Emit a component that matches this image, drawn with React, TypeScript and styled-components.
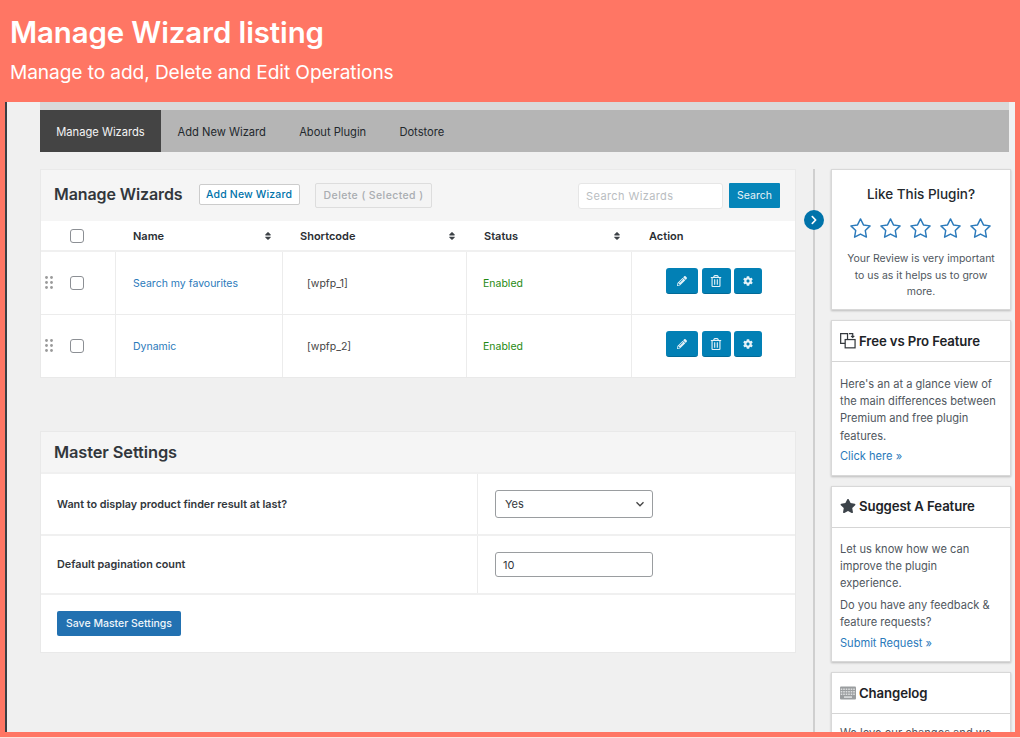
import React from 'react';
import styled, { createGlobalStyle } from 'styled-components';
import { FaPencilAlt, FaRegTrashAlt, FaCog, FaStar, FaSort, FaChevronRight } from 'react-icons/fa';
import { FiStar } from 'react-icons/fi';

const Global = createGlobalStyle`
  html, body { margin: 0; padding: 0; height: 738px; overflow: hidden; background: #ff7664; }
  * { box-sizing: border-box; }
  body { font-family: Inter, "Liberation Sans", sans-serif; color: #32373c; }
`;

const Page = styled.div`
  width: 1020px; height: 738px; display: flex; flex-direction: column; background: #ff7664; overflow: hidden;
  border-bottom: 1px solid #ffe1db;
`;
const Banner = styled.header`
  height: 102px; padding: 14px 10px 0; color: #fff; flex: none;
`;
const BannerTitle = styled.h1`
  margin: 0; font-size: 29.4px; line-height: 38px; font-weight: 600; letter-spacing: -0.1px;
`;
const BannerSub = styled.p`
  margin: 6px 0 0; font-size: 19.15px; line-height: 28px; font-weight: 400; letter-spacing: -0.1px;
`;
const Frame = styled.div`
  height: 630px; margin: 0 5px 0 5px; flex: none; background: #f0f0f0; border-left: 2px solid #3a3f44;
  padding: 0 6px 0 33px; overflow: hidden; display: flex; flex-direction: column; position: relative;
`;
const EdgeGap = styled.span`
  position: absolute; left: -2px; top: 188px; width: 2px; height: 28px; background: #fff;
  border-top: 8px solid #2f7fc4; border-bottom: 8px solid #2f7fc4;
`;
const Strip = styled.div`
  height: 8px; background: #d9d9d9; flex: none;
`;
const Tabs = styled.nav`
  height: 42px; display: flex; background: #b5b5b5; flex: none; margin-bottom: 17px;
`;
const Tab = styled.a<{ $active?: boolean }>`
  display: flex; align-items: center; padding: 1px 16.6px 0;
  font-size: 11.15px; color: ${p => (p.$active ? '#f4f4f4' : '#23282d')};
  background: ${p => (p.$active ? '#444' : 'transparent')};
  &:first-child { padding: 1px 16.3px 0; }
`;
const Columns = styled.div`
  display: flex; flex: 1; min-height: 0; align-items: stretch;
`;
const MainCol = styled.main`
  width: 756px; flex: none; display: flex; flex-direction: column; gap: 53px;
`;
const Rail = styled.div`
  width: 2px; margin: 0 16px 0 17px; flex: none; background: #cfcfcf; position: relative;
`;
const RailToggle = styled.span`
  position: absolute; left: -9px; top: 41px; width: 20px; height: 20px; border-radius: 50%;
  background: #0073aa; color: #fff; display: flex; align-items: center; justify-content: center; font-size: 10px;
`;
const Panel = styled.section`
  background: #fff; border: 1px solid #e9e9e9;
`;
const WizardHead = styled.div`
  height: 51px; background: #f5f5f5; display: flex; align-items: center; padding: 0 15px 0 13px;
`;
const PanelTitle = styled.h2`
  margin: 0; font-size: 16px; font-weight: 600; color: #32373c; letter-spacing: -0.1px;
`;
const WizardTitle = styled(PanelTitle)`
  margin-bottom: 3px;
`;
const SettingsTitle = styled(PanelTitle)`
  font-size: 16.4px;
`;
const OutlineBtn = styled.span`
  margin: 0 0 3px 16px; height: 21px; padding: 0 6.5px; display: flex; align-items: center; font-size: 10.5px;
  font-weight: 500; color: #0073aa; background: #fff; border: 1px solid #ccc; border-radius: 2px; letter-spacing: .15px;
`;
const DisabledBtn = styled.span`
  margin: 0 0 1px 15px; height: 25px; padding: 0 8px; display: flex; align-items: center; font-size: 10.5px;
  font-weight: 500; color: #a9adb1; background: #f4f4f4; border: 1px solid #ddd; border-radius: 2px; letter-spacing: .4px;
`;
const SearchInput = styled.span`
  margin: 0 0 0 auto; width: 145px; height: 26px; padding: 0 7px; display: flex; align-items: center;
  background: #fff; border: 1px solid #e6e6e6; border-radius: 3px; color: #b9bdc1; font-size: 11px; letter-spacing: .4px;
`;
const SearchBtn = styled.span`
  margin-left: 6px; width: 51px; height: 25px; display: flex; align-items: center; justify-content: center;
  background: #0585b9; color: #e8f3f8; font-size: 10.5px; border-radius: 1px;
`;
const Grid = styled.div`
  display: grid; grid-template-columns: 74px 167px 184px 165px 164px;
`;
const HeadCell = styled.div`
  height: 31px; display: flex; align-items: center; justify-content: space-between;
  padding: 0 9px 0 18px; font-size: 11px; font-weight: 600; color: #2a2e33; background: #fff;
  border-bottom: 2px solid #f0f0f0;
`;
const CheckHeadCell = styled(HeadCell)`
  padding: 0 0 0 29px; justify-content: flex-start;
`;
const SortIcon = styled(FaSort)`
  font-size: 10px; color: #3d4247;
`;
const Cell = styled.div`
  height: 63px; display: flex; align-items: center; padding: 0 16px; font-size: 10.5px; color: #444;
  border-left: 1px solid #ececec; border-bottom: 1px solid #ececec;
  &:nth-last-child(-n + 5) { height: 62px; border-bottom: 0; }
`;
const CheckCell = styled(Cell)`
  border-left: 0; padding: 0 0 0 4px; gap: 17px;
`;
const NameCell = styled(Cell)`
  padding-left: 17px;
`;
const ShortCell = styled(Cell)`
  padding-left: 24px;
`;
const ActionCell = styled(Cell)`
  padding: 0 0 0 34px; gap: 3.5px;
`;
const Checkbox = styled.span`
  width: 14px; height: 14px; background: #fff; border: 1px solid #8c8f94; border-radius: 3px; display: block; flex: none;
`;
const Grip = styled.svg`
  width: 8px; height: 13px; color: #9a9a9a; flex: none; margin-top: -1px;
`;
const LinkText = styled.a`
  color: #2b7abb; font-size: 10.5px;
`;
const Enabled = styled.span`
  color: #1f8a12; font-size: 10.5px;
`;
const IconBtn = styled.span<{ $w: number; $size: number }>`
  width: ${p => p.$w}px; height: 26px; display: flex; align-items: center; justify-content: center;
  background: #0280b5; color: #e6f2f8; border-radius: 3px; border-bottom: 1px solid #026a97; font-size: ${p => p.$size}px; margin-top: -4px;
`;
const SettingsHead = styled.div`
  height: 42px; background: #f5f5f5; display: flex; align-items: center; padding: 0 13px; border-bottom: 2px solid #f0f0f0;
`;
const SettingsRow = styled.div<{ $h: number }>`
  height: ${p => p.$h}px; display: grid; grid-template-columns: 437px 1fr; border-bottom: 2px solid #f0f0f0;
`;
const SettingLabel = styled.div`
  display: flex; align-items: center; padding-left: 16px; font-size: 10.8px; font-weight: 600; color: #32373c;
  border-right: 1px solid #ececec;
`;
const SettingField = styled.div`
  display: flex; align-items: center; padding-left: 17px;
`;
const SelectBox = styled.span`
  width: 158px; height: 28px; border: 1px solid #9a9da0; border-radius: 3px; background: #fff; display: flex; align-items: center;
  justify-content: space-between; padding: 0 7px 0 9px; font-size: 11px; color: #32373c;
`;
const InputBox = styled.span`
  width: 158px; height: 25px; border: 1px solid #9a9da0; border-radius: 3px; background: #fff; display: flex; align-items: center;
  padding: 0 7px; font-size: 11px; color: #32373c;
`;
const SaveRow = styled.div`
  height: 57px; display: flex; align-items: center; padding: 0 16px;
`;
const SaveBtn = styled.span`
  height: 25px; padding: 0 9px; display: flex; align-items: center; background: #2271b1; color: #eef5fa; font-size: 10.5px;
  border-radius: 2px; font-weight: 500;
`;
const Side = styled.aside`
  width: 180px; flex: none; display: flex; flex-direction: column; gap: 10px;
`;
const SideCard = styled.div`
  background: #fff; border: 1px solid #d8d8d8; box-shadow: 0 1px 2px rgba(0,0,0,.22); flex: none;
`;
const LikeCard = styled(SideCard)`
  height: 141px; padding: 16px 12px 0; text-align: center;
`;
const LikeTitle = styled.h3`
  margin: 0; font-size: 13.5px; line-height: 17px; font-weight: 500; color: #23282d;
`;
const Stars = styled.div`
  margin: 14px 0 11px -2px; display: flex; justify-content: center; gap: 7px; color: #2b7abb; font-size: 23px; line-height: 0;
  & svg { stroke-width: 1.5; }
`;
const LikeText = styled.p`
  margin: 0; font-size: 10.5px; line-height: 16.7px; color: #50575e;
`;
const CardHead = styled.div`
  height: 41px; display: flex; align-items: center; gap: 3px; padding: 0 8px 1px; border-bottom: 1px solid #d5d5d5;
`;
const SuggestHead = styled(CardHead)`
  padding-bottom: 3px;
`;
const CardTitle = styled.h3`
  margin: 0; font-size: 13.2px; font-weight: 600; color: #1d2327; letter-spacing: -0.1px;
`;
const CardBody = styled.div`
  padding: 13.5px 12px 0 8px;
`;
const SuggestBody = styled(CardBody)`
  padding-top: 12.5px;
`;
const ChangeBody = styled(CardBody)`
  padding-top: 11px;
`;
const CardText = styled.p`
  margin: 0 0 4px; font-size: 11.1px; line-height: 17.4px; color: #50575e;
`;
const CardLink = styled.a`
  display: block; margin-top: -1px; font-size: 11.1px; line-height: 17px; color: #2b7abb;
`;
const StarIcon = styled(FaStar)`
  font-size: 16px; color: #3c434a;
`;
const FreeCard = styled(SideCard)`height: 156px;`;
const SuggestCard = styled(SideCard)`height: 176px;`;
const ChangeCard = styled(SideCard)`height: 100px;`;

const GripIcon = () => (
  <Grip viewBox="0 0 8 13" fill="currentColor">
    {[0, 5, 10].map(y => (
      <React.Fragment key={y}>
        <circle cx="1.5" cy={y + 1.5} r="1.4" />
        <circle cx="6.5" cy={y + 1.5} r="1.4" />
      </React.Fragment>
    ))}
  </Grip>
);

const CompareIcon = () => (
  <svg width="16" height="17" viewBox="0 0 17 17" fill="none" stroke="#33383d" strokeWidth="1.3">
    <path d="M5.5 11.5H.7V1.2H8V7" />
    <rect x="5.5" y="7.5" width="10.5" height="8.8" />
    <path d="M9.5 1.2H13.5V5.2M11.8 3.6l1.7 1.7 1.7-1.7" />
  </svg>
);

const KeyboardIcon = () => (
  <svg width="16" height="14" viewBox="0 0 16 14">
    <rect x="0" y="0.5" width="16" height="13" rx="1" fill="#9a9d9f" />
    {[2.5, 5, 7.5].map(y =>
      [1.5, 4, 6.5, 9, 11.5, 14].map(x => <rect key={`${x}-${y}`} x={x - 0.8} y={y} width="1.6" height="1.5" fill="#dcdedf" />)
    )}
    <rect x="4" y="10.3" width="8" height="1.6" fill="#dcdedf" />
  </svg>
);

const Chevron = () => (
  <svg width="10" height="10" viewBox="0 0 10 10" fill="none" stroke="#444" strokeWidth="1.3">
    <path d="M1.5 3.2 5 6.8l3.5-3.6" />
  </svg>
);

const rows = [
  { name: 'Search my favourites', code: '[wpfp_1]' },
  { name: 'Dynamic', code: '[wpfp_2]' },
];

export default function App() {
  return (
    <Page>
      <Global />
      <Banner>
        <BannerTitle>Manage Wizard listing</BannerTitle>
        <BannerSub>Manage to add, Delete and Edit Operations</BannerSub>
      </Banner>
      <Frame>
        <EdgeGap />
        <Strip />
        <Tabs>
          <Tab $active>Manage Wizards</Tab>
          <Tab>Add New Wizard</Tab>
          <Tab>About Plugin</Tab>
          <Tab>Dotstore</Tab>
        </Tabs>
        <Columns>
          <MainCol>
            <Panel>
              <WizardHead>
                <WizardTitle>Manage Wizards</WizardTitle>
                <OutlineBtn>Add New Wizard</OutlineBtn>
                <DisabledBtn>Delete ( Selected )</DisabledBtn>
                <SearchInput>Search Wizards</SearchInput>
                <SearchBtn>Search</SearchBtn>
              </WizardHead>
              <Grid>
                <CheckHeadCell><Checkbox /></CheckHeadCell>
                <HeadCell>Name<SortIcon /></HeadCell>
                <HeadCell>Shortcode<SortIcon /></HeadCell>
                <HeadCell>Status<SortIcon /></HeadCell>
                <HeadCell>Action</HeadCell>
                {rows.map(r => (
                  <React.Fragment key={r.code}>
                    <CheckCell><GripIcon /><Checkbox /></CheckCell>
                    <NameCell><LinkText>{r.name}</LinkText></NameCell>
                    <ShortCell>{r.code}</ShortCell>
                    <Cell><Enabled>Enabled</Enabled></Cell>
                    <ActionCell>
                      <IconBtn $w={32} $size={10}><FaPencilAlt /></IconBtn>
                      <IconBtn $w={29} $size={12}><FaRegTrashAlt /></IconBtn>
                      <IconBtn $w={28} $size={10}><FaCog /></IconBtn>
                    </ActionCell>
                  </React.Fragment>
                ))}
              </Grid>
            </Panel>
            <Panel>
              <SettingsHead><SettingsTitle>Master Settings</SettingsTitle></SettingsHead>
              <SettingsRow $h={62}>
                <SettingLabel>Want to display product finder result at last?</SettingLabel>
                <SettingField><SelectBox>Yes<Chevron /></SelectBox></SettingField>
              </SettingsRow>
              <SettingsRow $h={59}>
                <SettingLabel>Default pagination count</SettingLabel>
                <SettingField><InputBox>10</InputBox></SettingField>
              </SettingsRow>
              <SaveRow><SaveBtn>Save Master Settings</SaveBtn></SaveRow>
            </Panel>
          </MainCol>
          <Rail><RailToggle><FaChevronRight /></RailToggle></Rail>
          <Side>
            <LikeCard>
              <LikeTitle>Like This Plugin?</LikeTitle>
              <Stars>{[0, 1, 2, 3, 4].map(i => <FiStar key={i} />)}</Stars>
              <LikeText>Your Review is very important to us as it helps us to grow more.</LikeText>
            </LikeCard>
            <FreeCard>
              <CardHead><CompareIcon /><CardTitle>Free vs Pro Feature</CardTitle></CardHead>
              <CardBody>
                <CardText>Here's an at a glance view of the main differences between Premium and free plugin features.</CardText>
                <CardLink>Click here »</CardLink>
              </CardBody>
            </FreeCard>
            <SuggestCard>
              <SuggestHead><StarIcon /><CardTitle>Suggest A Feature</CardTitle></SuggestHead>
              <SuggestBody>
                <CardText>Let us know how we can improve the plugin experience.</CardText>
                <CardText>Do you have any feedback &amp; feature requests?</CardText>
                <CardLink>Submit Request »</CardLink>
              </SuggestBody>
            </SuggestCard>
            <ChangeCard>
              <CardHead><KeyboardIcon /><CardTitle>Changelog</CardTitle></CardHead>
              <ChangeBody>
                <CardText>We love our changes and we</CardText>
              </ChangeBody>
            </ChangeCard>
          </Side>
        </Columns>
      </Frame>
    </Page>
  );
}
